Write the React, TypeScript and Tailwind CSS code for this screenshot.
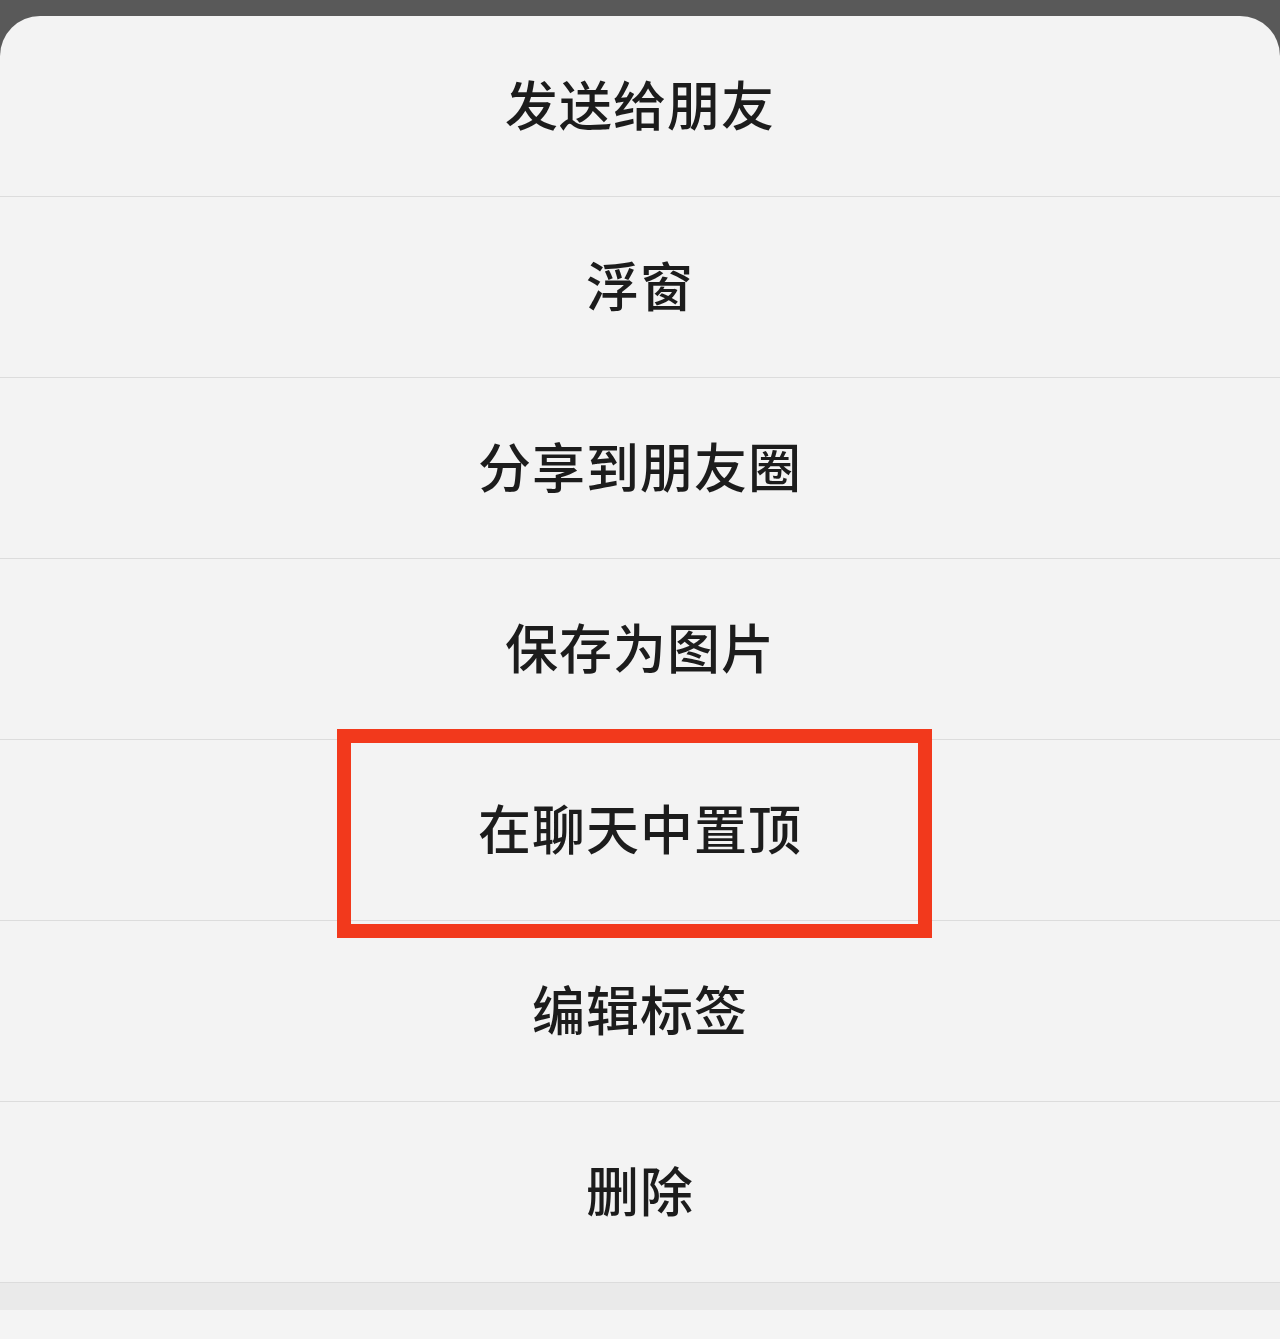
const items = ['发送给朋友', '浮窗', '分享到朋友圈', '保存为图片', '在聊天中置顶', '编辑标签', '删除'];

export default function App() {
  return (
    <div
      className="relative h-[1339px] w-[1280px] overflow-hidden bg-[#595959]"
      style={{ fontFamily: '"Noto Sans CJK SC", "Noto Sans", sans-serif' }}
    >
      <div className="mt-[16px] flex h-[1323px] flex-col rounded-t-[40px] bg-[#f3f3f3]">
        {items.map((label) => (
          <div
            key={label}
            className="flex h-[181px] shrink-0 items-center justify-center border-b border-[#dcdcdc] pb-[5px] text-[53px] font-medium leading-none text-[#1c1c1c]"
          >
            <span className="tracking-[1px]">{label}</span>
          </div>
        ))}
        <div className="h-[27px] shrink-0 bg-[#eaeaea]" />
        <div className="flex-1 bg-[#f4f4f4]" />
      </div>
      <div className="absolute left-[337px] top-[729px] h-[209px] w-[595px] border-[14px] border-[#f2391c]" />
    </div>
  );
}
